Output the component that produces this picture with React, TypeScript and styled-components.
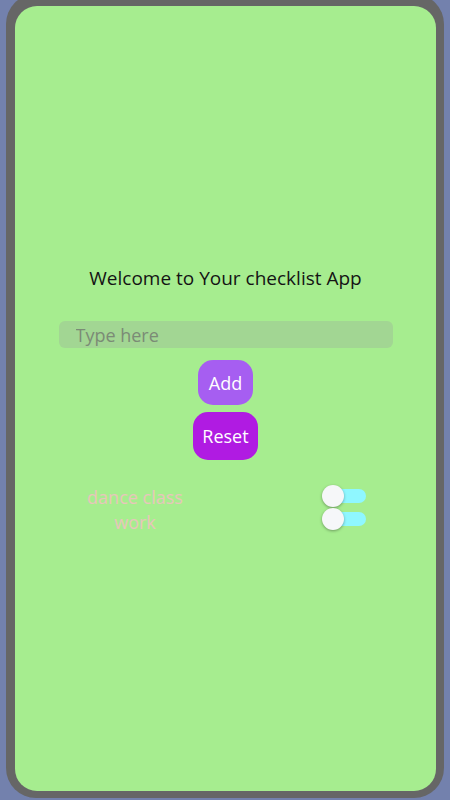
import styled, { createGlobalStyle } from "styled-components";

const GlobalStyle = createGlobalStyle`
  html, body {
    margin: 0;
    padding: 0;
    background: #7381ad;
    font-family: "Open Sans", "Noto Sans", sans-serif;
  }
`;

const Page = styled.div`
  width: 450px;
  height: 800px;
  padding: 0 6px 2px;
  box-sizing: border-box;
  overflow: hidden;
`;

const Frame = styled.div`
  height: 804px;
  margin-top: -6px;
  box-sizing: border-box;
  padding: 12px 8px 7px 9px;
  background: #666666;
  border-radius: 30px;
  display: flex;
`;

const Screen = styled.main`
  flex: 1;
  background: #a6ed8f;
  border-radius: 22px;
  display: flex;
  flex-direction: column;
  align-items: center;
  padding-top: 258px;
`;

const Title = styled.h1`
  margin: 0;
  font-size: 19px;
  font-weight: 400;
  color: #141414;
  line-height: 28px;
`;

const Input = styled.input`
  margin-top: 29px;
  width: 334px;
  height: 27px;
  box-sizing: border-box;
  border: none;
  outline: none;
  border-radius: 6px;
  background: #a2d693;
  padding: 0 0 0 17px;
  font-family: inherit;
  font-size: 18px;
  color: #333;

  &::placeholder {
    color: #7b8b76;
  }
`;

const Button = styled.button<{ $tone: "light" | "dark" }>`
  margin-top: ${(p) => (p.$tone === "light" ? "12px" : "7px")};
  border: none;
  border-radius: 15px;
  padding: 0 8px;
  height: ${(p) => (p.$tone === "light" ? "45px" : "48px")};
  min-width: ${(p) => (p.$tone === "light" ? "55px" : "65px")};
  background: ${(p) => (p.$tone === "light" ? "#a65ef1" : "#b01be2")};
  color: #fff;
  font-family: inherit;
  font-size: 18px;
  cursor: pointer;
`;

const Checklist = styled.div`
  margin-top: 25px;
  width: 100%;
  display: flex;
  justify-content: space-between;
`;

const Labels = styled.ul`
  list-style: none;
  margin: 0;
  padding: 0;
  width: 240px;
  display: flex;
  flex-direction: column;
  align-items: center;
`;

const Label = styled.li`
  font-size: 18px;
  line-height: 25px;
  color: #e8c6bb;
`;

const Toggles = styled.div`
  display: flex;
  flex-direction: column;
  gap: 1px;
  padding-right: 70px;
`;

const Toggle = styled.span`
  position: relative;
  display: block;
  width: 44px;
  height: 22px;

  &::before {
    content: "";
    position: absolute;
    left: 11px;
    top: 4px;
    width: 33px;
    height: 14px;
    border-radius: 7px;
    background: #8ff7ff;
  }

  &::after {
    content: "";
    position: absolute;
    left: 0;
    top: 0;
    width: 22px;
    height: 22px;
    border-radius: 50%;
    background: #f6f7f9;
    box-shadow: 0 1px 3px rgba(0, 0, 0, 0.35);
  }
`;

const items = ["dance class", "work"];

export default function App() {
  return (
    <>
      <GlobalStyle />
      <Page>
        <Frame>
          <Screen>
            <Title>Welcome to Your checklist App</Title>
            <Input placeholder="Type here" />
            <Button $tone="light">Add</Button>
            <Button $tone="dark">Reset</Button>
            <Checklist>
              <Labels>
                {items.map((item) => (
                  <Label key={item}>{item}</Label>
                ))}
              </Labels>
              <Toggles>
                {items.map((item) => (
                  <Toggle key={item} />
                ))}
              </Toggles>
            </Checklist>
          </Screen>
        </Frame>
      </Page>
    </>
  );
}
